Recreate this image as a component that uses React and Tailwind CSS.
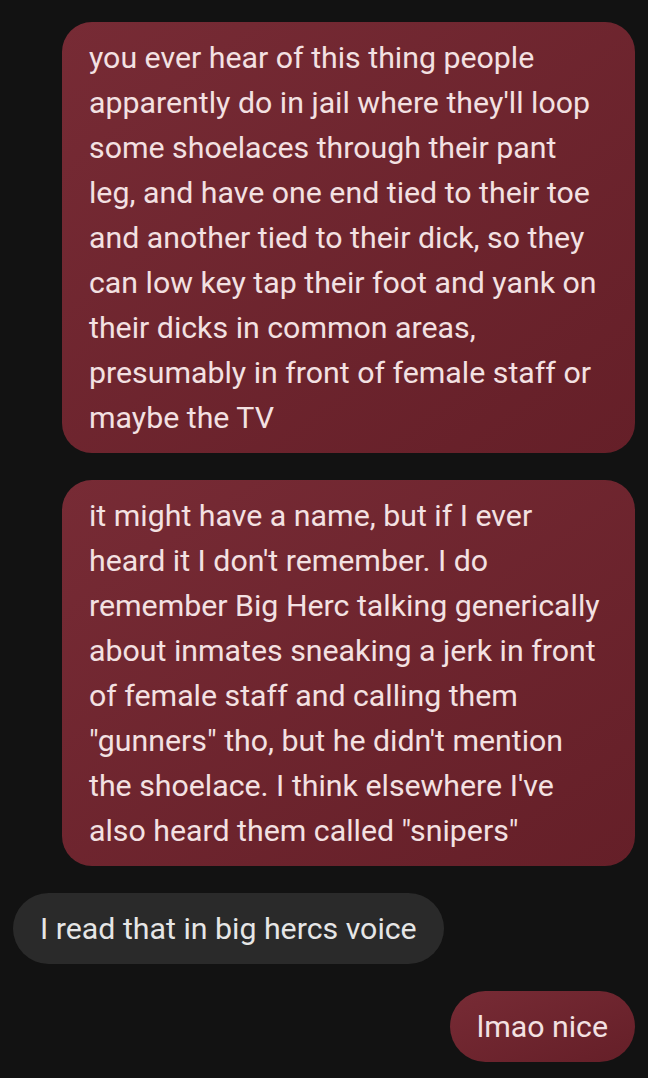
const SENT = "bg-gradient-to-br from-[#772b35] to-[#651f28] text-[#f3e1e2]"
const RECEIVED = "bg-[#2a2a2a] text-[#e6e6e6]"

const messages = [
  {
    from: "me",
    text: "you ever hear of this thing people apparently do in jail where they'll loop some shoelaces through their pant leg, and have one end tied to their toe and another tied to their dick, so they can low key tap their foot and yank on their dicks in common areas, presumably in front of female staff or maybe the TV",
  },
  {
    from: "me",
    text: "it might have a name, but if I ever heard it I don't remember. I do remember Big Herc talking generically about inmates sneaking a jerk in front of female staff and calling them \"gunners\" tho, but he didn't mention the shoelace. I think elsewhere I've also heard them called \"snipers\"",
  },
  { from: "them", text: "I read that in big hercs voice", short: true },
  { from: "me", text: "lmao nice", short: true },
]

export default function App() {
  return (
    <div className="min-h-[1078px] w-full bg-[#121212] px-[13px] pt-[22px] font-['Roboto',sans-serif]">
      <div className="flex flex-col gap-[27px]">
        {messages.map((m, i) => (
          <div key={i} className={`flex ${m.from === "me" ? "justify-end" : "justify-start"}`}>
            <div
              className={`max-w-[573px] px-[27px] py-[13px] text-[30.3px] leading-[45px] ${
                m.short ? "rounded-[36px]" : "rounded-[30px]"
              } ${m.from === "me" ? SENT : RECEIVED}`}
            >
              {m.text}
            </div>
          </div>
        ))}
      </div>
    </div>
  )
}
